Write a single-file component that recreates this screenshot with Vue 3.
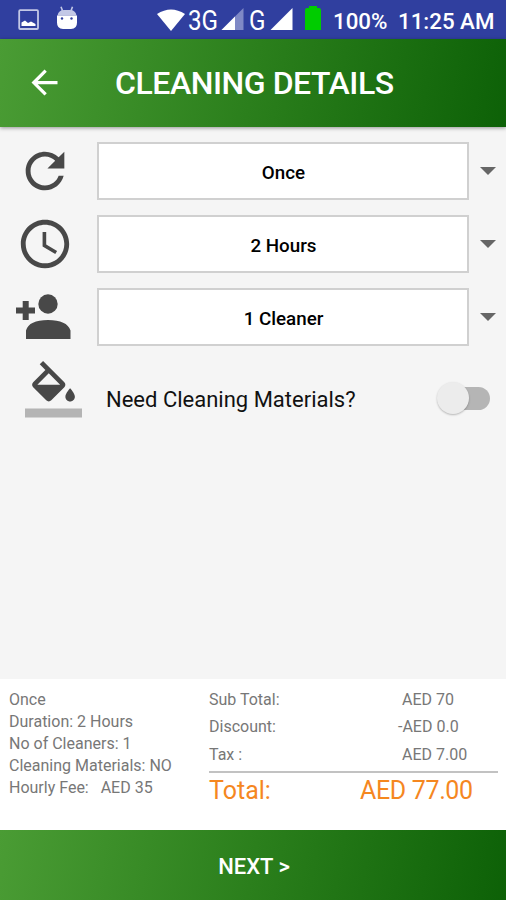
<script setup>
import { ref } from 'vue'

const options = ref([
  { icon: 'refresh', label: 'Once' },
  { icon: 'clock', label: '2 Hours' },
  { icon: 'person', label: '1 Cleaner' },
])
const details = ['Once', 'Duration: 2 Hours', 'No of Cleaners: 1', 'Cleaning Materials: NO', 'Hourly Fee:\u00a0\u00a0 AED 35']
const costs = [
  { name: 'Sub Total:', value: 'AED 70' },
  { name: 'Discount:', value: '-AED 0.0', minus: true },
  { name: 'Tax :', value: 'AED 7.00' },
]
const materials = ref(false)
</script>

<template>
  <div class="screen">
    <div class="status">
      <svg class="s-picture" viewBox="0 0 22 22"><rect x="1.200" y="1.200" width="18.800" height="18.800" rx="1" fill="none" stroke="#c3c8e6" stroke-width="1.800" /><path d="M3.500 17v-3.500l3.500-2 3 2.500 3-1.500 4.500 2.500v2z" fill="#fff" /></svg>
      <svg class="s-robot" viewBox="0 0 22 24"><path d="M5 .8l1.500 4M16.500 .8l-1.500 4" stroke="#c3c8e6" stroke-width="1.600" /><path d="M1.500 9.500Q2.500 4 8 4h6q5.500 0 6.500 5.500z" fill="#c3c8e6" /><path d="M1 9.500h20v7q0 6.500-6 6.500H7q-6 0-6-6.500z" fill="#fff" /><circle cx="6" cy="12.500" r="1.200" fill="#303f9f" /><circle cx="15.500" cy="12.500" r="1.200" fill="#303f9f" /></svg>
      <svg class="s-wifi" viewBox="0 0 28 22"><path d="M0 5Q14-4 28 5L14 22z" fill="#fff" /></svg>
      <span class="net net-3g">3G</span>
      <svg class="s-signal" viewBox="0 0 22 22"><path d="M22 0v22H0z" fill="#7f89c6" /><path d="M13.500 8.500V22H0z" fill="#fff" /></svg>
      <span class="net net-g">G</span>
      <svg class="s-signal s-full" viewBox="0 0 22 22"><path d="M22 0v22H0z" fill="#fff" /></svg>
      <svg class="s-battery" viewBox="0 0 16 24"><path d="M4 0h8v2h2q2 0 2 2v20H0V4q0-2 2-2h2z" fill="#0c0" /></svg>
      <span class="pct">100%</span>
      <span class="time">11:25 AM</span>
    </div>

    <header class="bar">
      <svg class="back" viewBox="0 0 24 24"><path d="M20 11H7.830l5.590-5.590L12 4l-8 8 8 8 1.410-1.410L7.830 13H20z" fill="#fff" /></svg>
      <h1>CLEANING DETAILS</h1>
    </header>

    <main>
      <div v-for="o in options" :key="o.icon" class="row">
        <div class="cell">
          <svg v-if="o.icon === 'refresh'" class="icon" viewBox="0 0 24 24"><path d="M17.650 6.350C16.200 4.900 14.210 4 12 4c-4.420 0-7.990 3.580-7.990 8s3.570 8 7.990 8c3.730 0 6.840-2.550 7.730-6h-2.080c-.82 2.330-3.040 4-5.650 4-3.310 0-6-2.690-6-6s2.690-6 6-6c1.660 0 3.140.69 4.220 1.780L13 11h7V4z" /></svg>
          <svg v-else-if="o.icon === 'clock'" class="icon" viewBox="0 0 24 24"><path d="M11.990 2C6.470 2 2 6.480 2 12s4.470 10 9.990 10C17.520 22 22 17.520 22 12S17.520 2 11.990 2zM12 20c-4.420 0-8-3.580-8-8s3.580-8 8-8 8 3.580 8 8-3.580 8-8 8z" /><path d="M12.500 7H11v6l5.250 3.150.75-1.230-4.500-2.670z" /></svg>
          <svg v-else class="icon" viewBox="0 0 58 58"><circle cx="32" cy="16" r="9.700" /><path d="M10 51V42.500Q13 32 32 32T54.500 42.500V51zM6.700 13h6v6.500H19v6h-6.300V32h-6v-6.500H0v-6h6.700z" /></svg>
        </div>
        <button class="select" type="button">{{ o.label }}</button>
        <i class="caret"></i>
      </div>

      <div class="materials">
        <svg class="fill" viewBox="0 0 24 24"><path d="M16.560 8.940L7.620 0 6.210 1.410l2.380 2.380-5.150 5.150c-.59.59-.59 1.540 0 2.120l5.500 5.500c.29.29.68.44 1.060.44s.77-.15 1.060-.44l5.500-5.500c.59-.58.59-1.530 0-2.120zM5.210 10L10 5.210 14.790 10H5.210zM19 11.500s-2 2.170-2 3.500c0 1.100.9 2 2 2s2-.9 2-2c0-1.330-2-3.500-2-3.500z" /><path class="swatch" d="M0 20h24v3.800H0z" /></svg>
        <span class="question">Need Cleaning Materials?</span>
        <button class="switch" :class="{ on: materials }" type="button" @click="materials = !materials"><span class="knob"></span></button>
      </div>
    </main>

    <section class="summary">
      <div class="details">
        <p v-for="d in details" :key="d">{{ d }}</p>
      </div>
      <div class="costs">
        <div v-for="c in costs" :key="c.name" class="cost">
          <span>{{ c.name }}</span><span class="value" :class="{ minus: c.minus }">{{ c.value }}</span>
        </div>
        <div class="total"><span>Total:</span><span class="sum">AED 77.00</span></div>
      </div>
    </section>

    <button class="next" type="button">NEXT &gt;</button>
  </div>
</template>

<style>
body { margin: 0; }
</style>

<style scoped>
.screen { width: 506px; height: 900px; display: flex; flex-direction: column; background: #f5f5f5; font-family: Roboto, "Liberation Sans", sans-serif; overflow: hidden; }
svg { display: block; flex: none; }
button { border: 0; padding: 0; font-family: inherit; }
.status { height: 39px; flex: none; display: flex; align-items: center; background: #303f9f; color: #fff; font-size: 22.300px; font-weight: 500; white-space: nowrap; box-sizing: border-box; padding-left: 18px; }
.s-picture { width: 22px; height: 22px; }
.s-robot { width: 22px; height: 24px; margin-left: 16px; margin-top: -4px; }
.s-wifi { width: 28px; height: 22px; margin-left: 79px; }
.net { font-size: 27.500px; font-weight: 400; transform: scaleX(.88); transform-origin: left; margin-top: 1px; }
.net-3g { width: 33px; margin-left: 3px; }
.s-signal { width: 23px; height: 22px; margin-top: -2px; }
.net-g { width: 18px; margin-left: 5px; }
.s-full { margin-left: 3px; }
.s-battery { width: 16px; height: 24px; margin-left: 12px; margin-top: -3px; }
.pct { width: 53px; margin-left: 12px; margin-top: 2px; }
.time { margin-left: 12px; margin-top: 2px; }
.bar { height: 88px; flex: none; display: flex; align-items: center; background: linear-gradient(100deg, #4a9c34, #2b7f1c 50%, #0d6107); box-shadow: 0 1px 4px rgba(0, 0, 0, .4); z-index: 1; }
.back { width: 39px; height: 39px; margin-left: 25px; margin-top: -1px; }
h1 { margin: 0 0 0 51px; font-size: 32px; font-weight: 500; line-height: 40px; letter-spacing: -.45px; color: #fff; white-space: nowrap; }
main { flex: 1; padding-top: 15px; }
.row { display: flex; align-items: center; height: 58px; margin-bottom: 15px; }
.cell { width: 81px; padding-left: 16px; }
.icon { width: 58px; height: 58px; fill: #484848; }
.select { width: 372px; height: 58px; box-sizing: border-box; border: 2px solid #d0d0d0; background: #fff; color: #000; font-size: 18.800px; font-weight: 500; padding: 3px 0 0 1px; }
.caret { margin-left: 11px; border: 8px solid transparent; border-top: 8px solid #666; border-bottom: 0; }
.materials { display: flex; align-items: center; height: 57px; padding-left: 25px; }
.fill { width: 57px; height: 57px; fill: #484848; }
.swatch { fill: #b4b4b4; }
.question { width: 331px; margin-left: 24px; margin-top: 20px; font-size: 22px; color: #111; white-space: nowrap; }
.switch { width: 53px; height: 23px; margin-top: 17px; border-radius: 12px; background: linear-gradient(#b5b5b5, #b5b5b5) 10px 0 / 43px 23px no-repeat; display: flex; align-items: center; }
.switch.on { justify-content: flex-end; }
.knob { width: 32px; height: 32px; flex: none; border-radius: 50%; background: #ececec; box-shadow: 0 1px 2px rgba(0, 0, 0, .25); }
.summary { flex: none; height: 151px; box-sizing: border-box; padding: 10px 8px 0 9px; background: #fff; display: flex; color: #777; font-size: 16px; }
.details { width: 200px; }
p { margin: 0; line-height: 22.100px; white-space: nowrap; }
.costs { flex: 1; }
.cost { display: flex; height: 27.300px; line-height: 22px; }
.cost span:first-child { width: 193px; }
.minus { margin-left: -4px; }
.total { display: flex; border-top: 2px solid #c2c2c2; color: #f5871f; font-size: 25px; line-height: 36px; }
.total span:first-child { width: 151px; }
.sum { letter-spacing: -.35px; }
.next { flex: none; height: 70px; background: linear-gradient(100deg, #4a9c34, #2b7f1c 50%, #0d6107); color: #fff; font-size: 22px; font-weight: 500; padding: 3px 0 0 2px; }
</style>
